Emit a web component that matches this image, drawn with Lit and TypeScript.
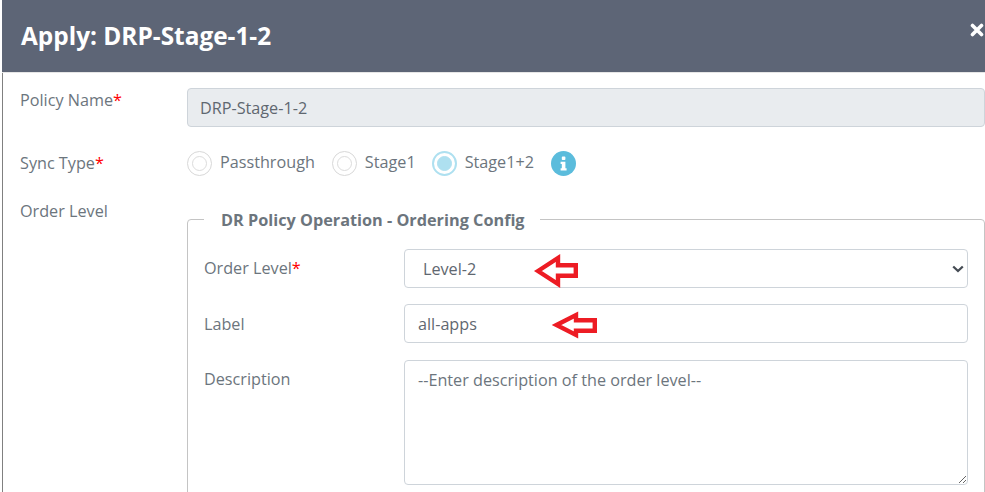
import { LitElement, html, css } from "lit";
import { customElement } from "lit/decorators.js";

@customElement("app-root")
export class AppRoot extends LitElement {
  static styles = css`
    :host {
      display: block;
      width: 985px;
      height: 492px;
      overflow: hidden;
      position: relative;
      background: #fff;
      font-family: "Open Sans", sans-serif;
      font-size: 16.2px;
      color: #6c757d;
    }
    * { box-sizing: border-box; }
    .modal {
      margin-left: 2px;
      height: 492px;
      display: flex;
      flex-direction: column;
    }
    .header {
      height: 73px;
      flex: none;
      background: #5d6576;
      color: #fff;
      display: flex;
      align-items: center;
      justify-content: space-between;
      padding: 0 0 0 19px;
      border-bottom: 1px solid #e6e6e6;
    }
    .header h1 {
      margin: 0;
      font-size: 24.4px;
      font-weight: 700;
      line-height: 30px;
    }
    .close { width: 14px; height: 14px; display: block; margin-top: -12px; margin-right: 1px; }
    .body {
      flex: 1;
      min-height: 0;
      border-left: 1px solid #808080;
      display: grid;
      grid-template-columns: 167px 1fr;
      grid-template-rows: 55px 52px auto;
      padding: 15px 0 0 17px;
    }
    .lbl { line-height: 24px; }
    .lbl i { color: #f00; font-style: normal; }
    .ro {
      height: 39px;
      border: 1px solid #ced4da;
      border-radius: 4px;
      background: #e9ecef;
      font: inherit;
      color: #5f6770;
      padding: 0 12px;
      width: 798px;
      display: block;
    }
    .l2 { margin-top: 8px; }
    .l3 { margin-top: 4px; }
    .radios {
      display: flex;
      align-items: center;
      height: 28px;
      margin-top: 6px;
    }
    .r { display: flex; align-items: center; gap: 8px; margin-right: 17px; line-height: 20px; }
    .r.tight { margin-right: 16px; }
    .r span { position: relative; top: -1px; }
    .r.last { margin-right: 18px; }
    .dot {
      width: 25px;
      height: 25px;
      border-radius: 50%;
      border: 1px solid #d8d8d8;
      display: flex;
      align-items: center;
      justify-content: center;
      flex: none;
    }
    .dot::after {
      content: "";
      width: 13px;
      height: 13px;
      border-radius: 50%;
      border: 1px solid #dcdcdc;
    }
    .dot.on { border: 2px solid #aee0f0; }
    .dot.on::after { background: #aee0f0; border-color: #aee0f0; }
    .info { width: 25px; height: 25px; margin-left: -1px; display: block; }
    fieldset {
      margin: 13px 0 0;
      padding: 19px 16px 0 16px;
      border: 1px solid #c4c4c4;
      border-radius: 4px;
      width: 798px;
      height: 320px;
      min-width: 0;
    }
    legend {
      padding: 0 16px;
      font-size: 16.25px;
      font-weight: 700;
      line-height: 22px;
      color: #6c757d;
    }
    legend span { position: relative; top: 1px; left: 1px; }
    .frow {
      display: grid;
      grid-template-columns: 200px 564px;
      margin-bottom: 16px;
      position: relative;
    }
    .frow.desc { margin-top: 17px; }
    .frow .lbl { line-height: 20px; padding-top: 9px; }
    .frow .lbl.low { padding-top: 10px; }
    .c {
      height: 39px;
      width: 100%;
      border: 1px solid #ced4da;
      border-radius: 4px;
      background: #fff;
      font: inherit;
      color: #5f6770;
      padding: 0 13px;
      display: block;
      outline: none;
    }
    select.c { appearance: none; padding: 0 30px 0 18px; }
    textarea.c {
      height: 125px;
      padding: 8px 13px;
      line-height: 22px;
      resize: both;
    }
    textarea.c::placeholder { color: #6c757d; opacity: 1; }
    .arrow { position: absolute; display: block; pointer-events: none; }
    .a1 { left: 329px; top: 4px; width: 47px; height: 36px; }
    .a2 { left: 347px; top: 5px; width: 48px; height: 32px; }
    .chev { left: 748px; top: 16px; width: 12px; height: 8px; }
  `;

  render() {
    return html`
      <div class="modal">
        <div class="header">
          <h1>Apply: DRP-Stage-1-2</h1>
          <svg class="close" viewBox="0 0 14 14">
            <path d="M2.5 2.5 L11.5 11.5 M11.5 2.5 L2.5 11.5" stroke="#fff" stroke-width="3.6" stroke-linecap="round" fill="none" />
          </svg>
        </div>
        <div class="body">
          <div class="lbl">Policy Name<i>*</i></div>
          <input class="ro" .value=${"DRP-Stage-1-2"} disabled />
          <div class="lbl l2">Sync Type<i>*</i></div>
          <div class="radios">
            <label class="r"><div class="dot"></div><span>Passthrough</span></label>
            <label class="r tight"><div class="dot"></div><span>Stage1</span></label>
            <label class="r last"><div class="dot on"></div><span>Stage1+2</span></label>
            <svg class="info" viewBox="0 0 25 25">
              <circle cx="12.5" cy="12.5" r="12.5" fill="#5bbcdc" />
              <rect x="10.8" y="5.6" width="3.6" height="3.4" rx="0.8" fill="#fff" />
              <path d="M9.6 10.8h4.8v6.4h1.2v2.2H9.6v-2.2h1.2v-4.2H9.6z" fill="#fff" />
            </svg>
          </div>
          <div class="lbl l3">Order Level</div>
          <fieldset>
            <legend><span>DR Policy Operation - Ordering Config</span></legend>
            <div class="frow">
              <div class="lbl">Order Level<i>*</i></div>
              <select class="c"><option>Level-2</option></select>
              <svg class="arrow chev" viewBox="0 0 12 8">
                <path d="M1.2 1.5 L6 6 L10.8 1.5" fill="none" stroke="#454c54" stroke-width="2.3" />
              </svg>
              <svg class="arrow a1" viewBox="0 0 47 36">
                <path d="M5 18 L25 5 V12.2 H42.8 V22.8 H25 V31 Z" fill="#fff" stroke="#ed1c24" stroke-width="4.4" />
              </svg>
            </div>
            <div class="frow">
              <div class="lbl low">Label</div>
              <input class="c" .value=${"all-apps"} />
              <svg class="arrow a2" viewBox="0 0 48 32">
                <path d="M5.5 16 L25 6 V11.2 H43.8 V21.8 H25 V26 Z" fill="#fff" stroke="#ed1c24" stroke-width="4.4" />
              </svg>
            </div>
            <div class="frow desc">
              <div class="lbl">Description</div>
              <textarea class="c" placeholder="--Enter description of the order level--"></textarea>
            </div>
          </fieldset>
        </div>
      </div>
    `;
  }
}
